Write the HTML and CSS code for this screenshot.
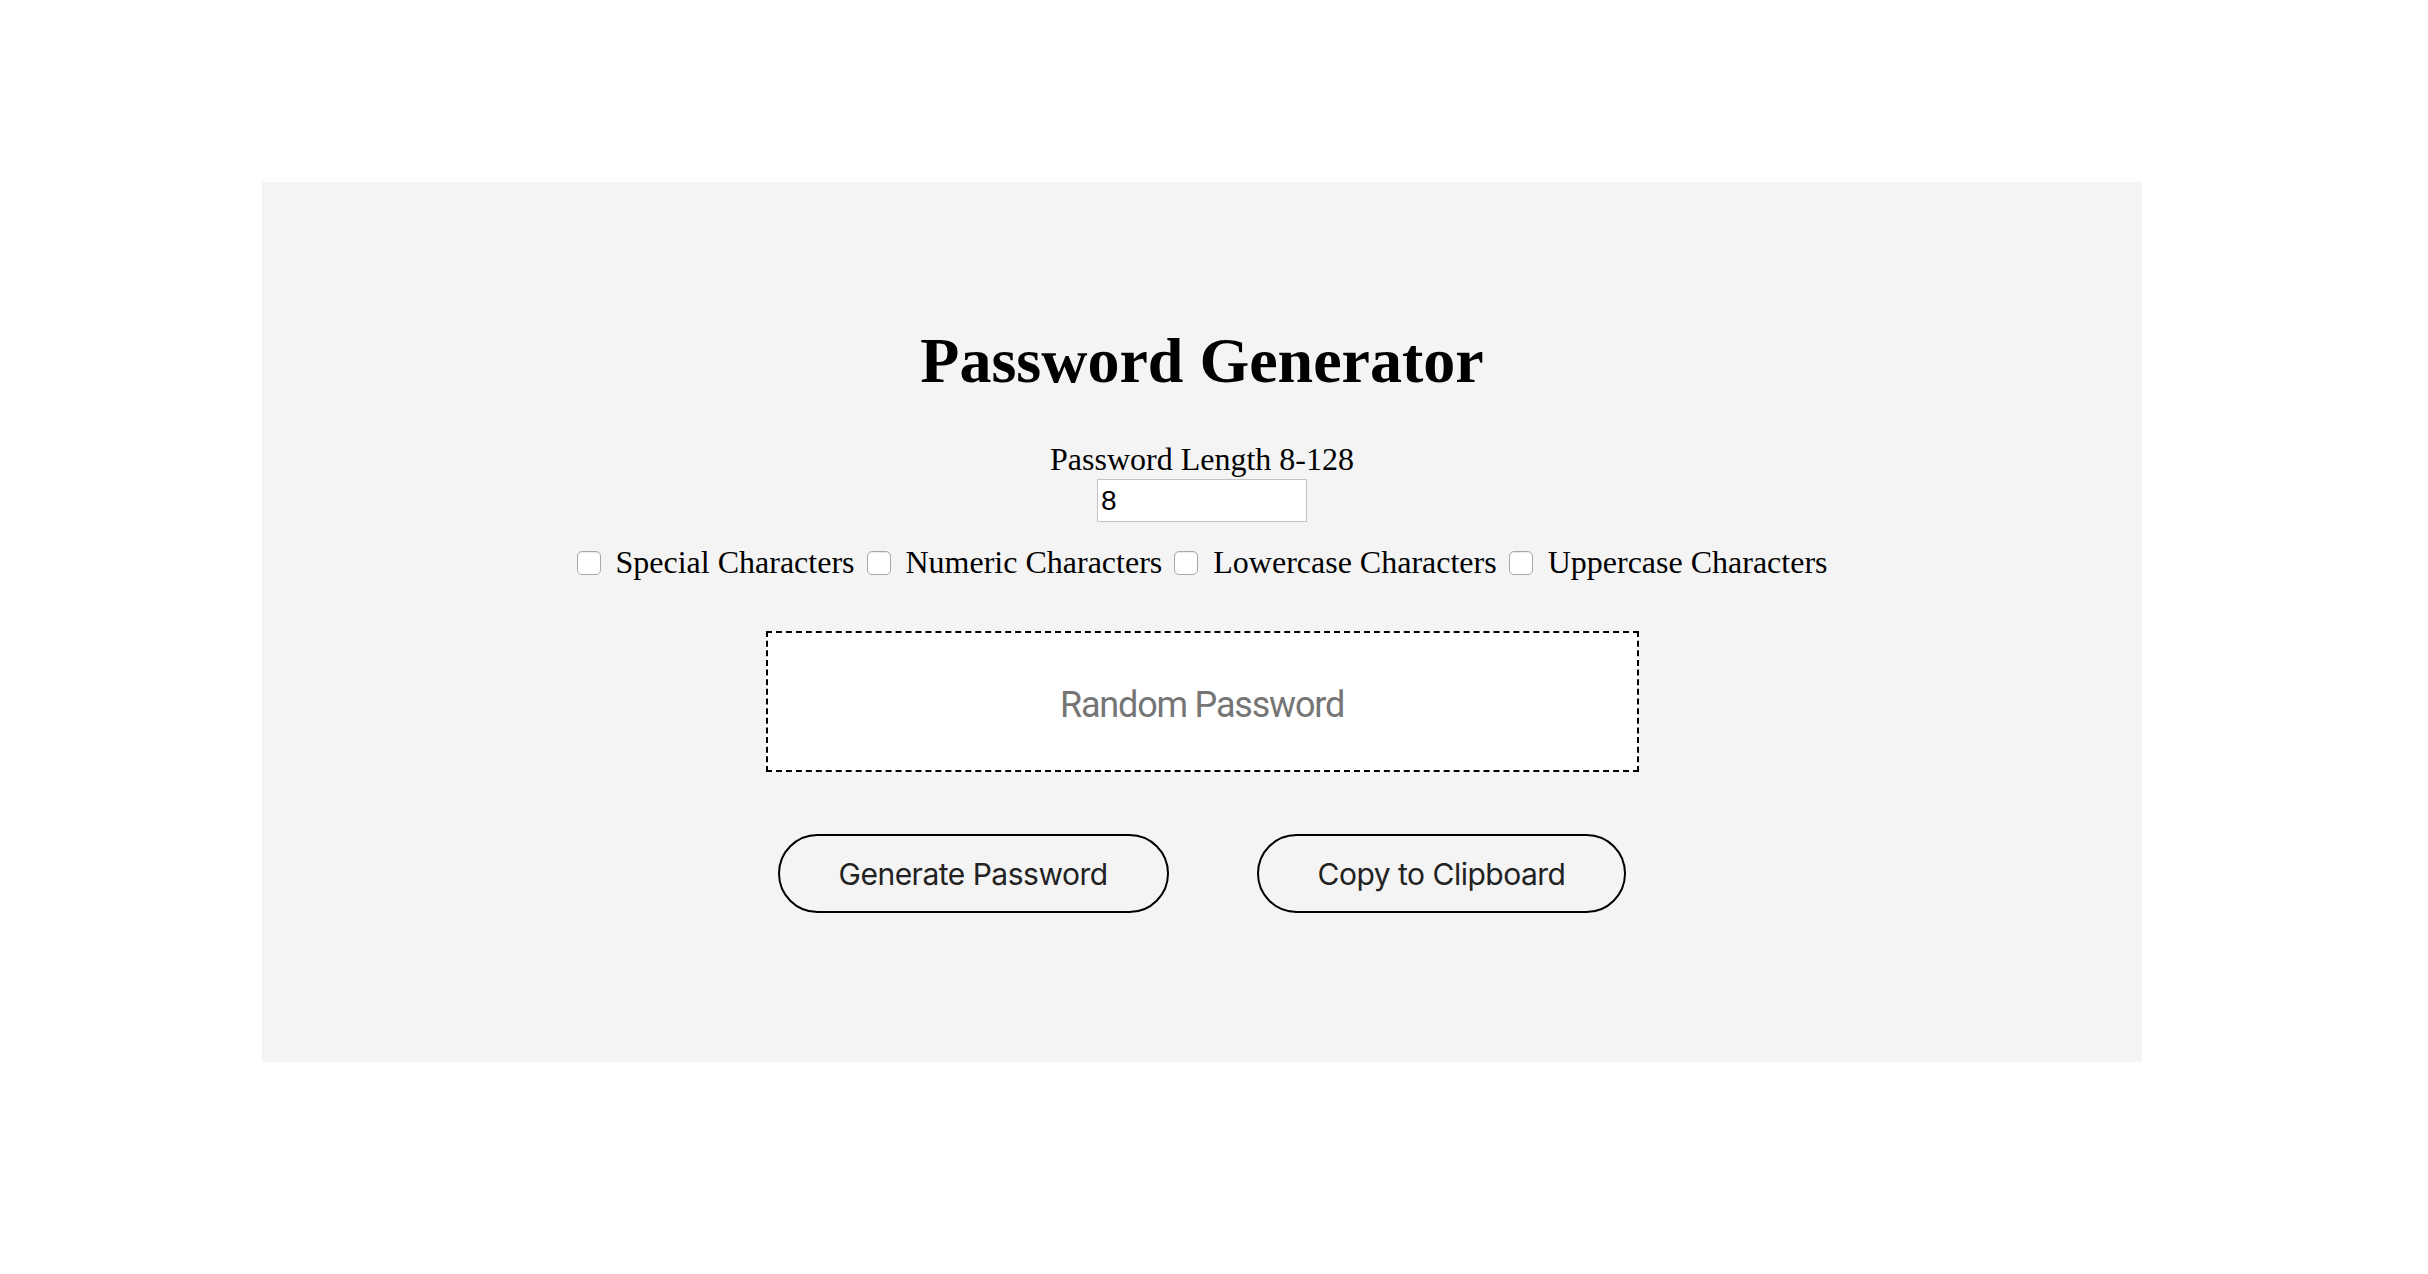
FILE: index.html
```html
<!DOCTYPE html>
<html lang="en">
<head>
<meta charset="utf-8">
<title>Password Generator</title>
<link rel="stylesheet" href="styles.css">
</head>
<body>
<main class="card">
  <h1 class="title">Password Generator</h1>
  <div class="length">
    <label class="length-label" for="length">Password Length 8-128</label>
    <input class="length-input" id="length" type="text" value="8">
  </div>
  <div class="options">
    <label class="option"><input class="check" type="checkbox"><span>Special Characters</span></label>
    <label class="option"><input class="check" type="checkbox"><span>Numeric Characters</span></label>
    <label class="option"><input class="check" type="checkbox"><span>Lowercase Characters</span></label>
    <label class="option"><input class="check" type="checkbox"><span>Uppercase Characters</span></label>
  </div>
  <textarea class="output" placeholder="Random Password" readonly></textarea>
  <div class="actions">
    <button class="btn" type="button">Generate Password</button>
    <button class="btn" type="button">Copy to Clipboard</button>
  </div>
</main>
</body>
</html>
```

FILE: styles.css
```css
html, body {
  margin: 0;
  padding: 0;
  background: #ffffff;
}

body {
  font-family: "Liberation Serif", "Times New Roman", serif;
  font-size: 32px;
  color: #000;
}

.card {
  box-sizing: border-box;
  width: 1880px;
  height: 880px;
  margin: 182px 0 0 262px;
  padding-top: 142px;
  background: #f4f4f4;
  display: flex;
  flex-direction: column;
  align-items: center;
}

.title {
  margin: 0;
  font-size: 64px;
  font-weight: bold;
  line-height: normal;
}

.length {
  margin-top: 43px;
  display: flex;
  flex-direction: column;
  align-items: center;
}

.length-label {
  display: block;
  line-height: normal;
}

.length-input {
  box-sizing: border-box;
  width: 210px;
  height: 43px;
  margin-top: 1px;
  padding: 1px 3px;
  border: 1px solid #c3c3c3;
  background: #fff;
  font-family: "Liberation Sans", Arial, sans-serif;
  font-size: 28px;
  color: #000;
  outline: none;
}

.options {
  margin-top: 22px;
  display: flex;
  align-items: center;
  gap: 12px;
  line-height: normal;
}

.option {
  display: flex;
  align-items: center;
  gap: 15px;
}

.check {
  appearance: none;
  -webkit-appearance: none;
  box-sizing: border-box;
  width: 24px;
  height: 24px;
  margin: 0;
  border: 1.5px solid #a9a9a9;
  border-radius: 5px;
  background: #fff;
  box-shadow: inset 0 1px 1px rgba(0, 0, 0, 0.08);
}

.output {
  box-sizing: border-box;
  width: 873px;
  height: 141px;
  margin-top: 50px;
  padding: 50px 10px 0;
  border: 2px dashed #000;
  background: #fff;
  resize: none;
  text-align: center;
  font-family: Roboto, "Liberation Sans", sans-serif;
  font-size: 36px;
  line-height: 44px;
  letter-spacing: -1.2px;
  color: #333;
  outline: none;
  overflow: hidden;
}

.output::placeholder {
  color: #757575;
}

.actions {
  margin-top: 62px;
  display: flex;
  gap: 88px;
}

.btn {
  box-sizing: border-box;
  height: 79px;
  padding: 0 59px;
  border: 2px solid #000;
  border-radius: 40px;
  background: transparent;
  font-family: Inter, "Liberation Sans", sans-serif;
  font-size: 30px;
  letter-spacing: -0.5px;
  color: #222;
  cursor: pointer;
}
```
